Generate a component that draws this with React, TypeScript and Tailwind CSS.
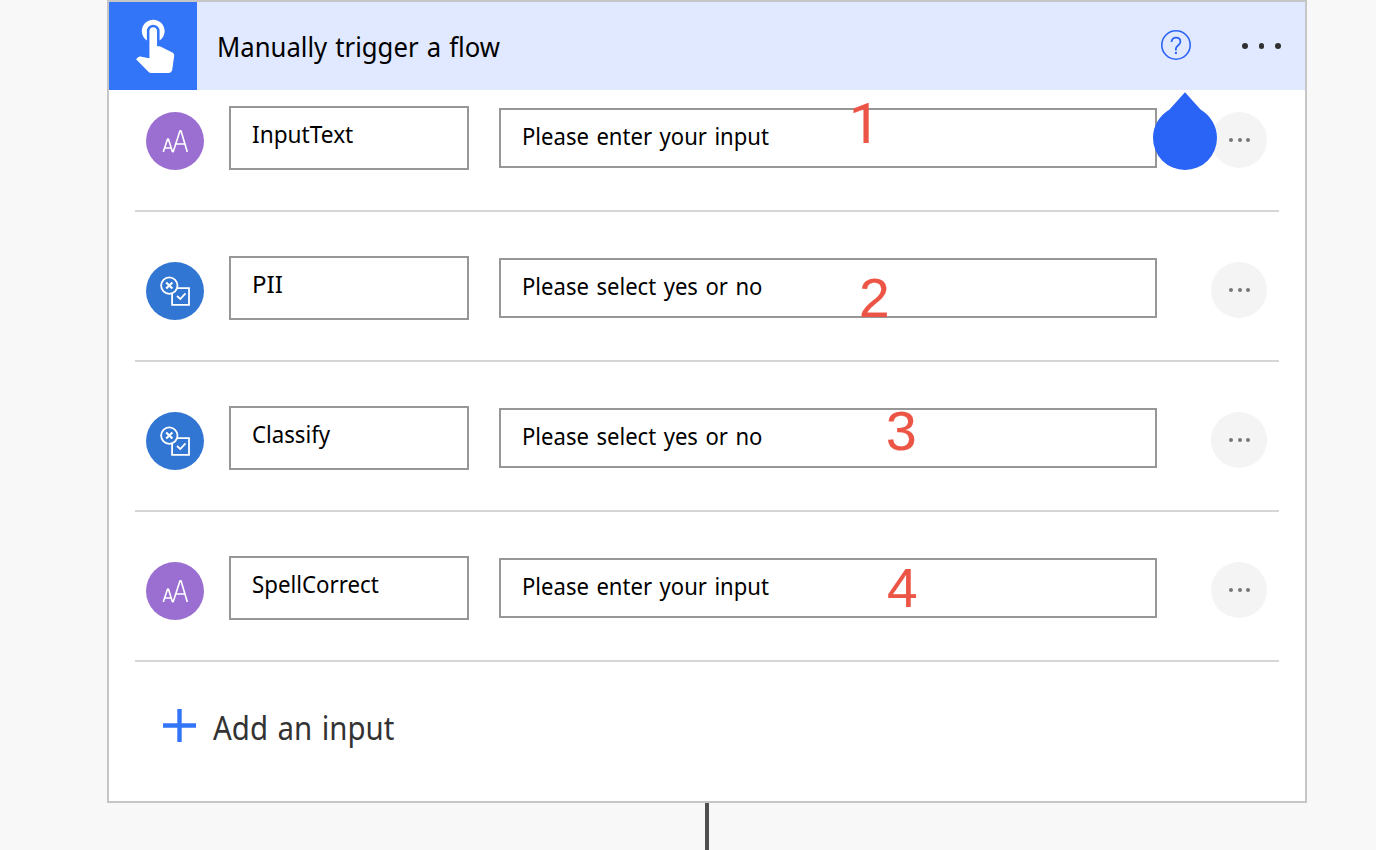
import React from "react";
import { MdTouchApp } from "react-icons/md";

type Kind = "text" | "boolean";

interface FlowInput {
  kind: Kind;
  name: string;
  prompt: string;
  nameScale: string;
  step: string;
  stepStyle: string;
}

const inputs: FlowInput[] = [
  { kind: "text", name: "InputText", prompt: "Please enter your input", nameScale: "scale-x-[0.944]", step: "1", stepStyle: "left-[348px] top-[-14px] font-['Roboto',sans-serif]" },
  { kind: "boolean", name: "PII", prompt: "Please select yes or no", nameScale: "scale-x-100", step: "2", stepStyle: "left-[358px] top-[10px] font-['Liberation_Sans',Arial,sans-serif]" },
  { kind: "boolean", name: "Classify", prompt: "Please select yes or no", nameScale: "scale-x-[0.925]", step: "3", stepStyle: "left-[385px] top-[-7px] font-['Liberation_Sans',Arial,sans-serif]" },
  { kind: "text", name: "SpellCorrect", prompt: "Please enter your input", nameScale: "scale-x-[0.928]", step: "4", stepStyle: "left-[386px] top-0 font-['Liberation_Sans',Arial,sans-serif]" },
];

function TextIcon() {
  return (
    <svg viewBox="0 0 58 58" className="size-full" fill="none" stroke="#fff" strokeWidth="1.6" strokeLinejoin="bevel">
      <path d="M17.5 40V39.3L21.6 27H22.4L26.3 39.6H27.3L34 18.8H35L41.1 39.3V40M18.8 36H25.1M29.3 32H39" />
    </svg>
  );
}

function BooleanIcon() {
  return (
    <svg viewBox="0 0 58 58" className="size-full" fill="none" stroke="#fff" strokeWidth="1.8">
      <circle cx="23.3" cy="23.6" r="8.2" />
      <path d="M20.2 20.4 26.4 26.6M26.4 20.4 20.2 26.6" strokeWidth="2.1" />
      <path d="M31.2 26.2H43V42.9H26.1V31.4" />
      <path d="M31 34 34.3 37 39.5 31.3" />
    </svg>
  );
}

function Dots({ gap, size }: { gap: string; size: string }) {
  return (
    <span className={`flex ${gap}`}>
      {[0, 1, 2].map((i) => (
        <span key={i} className={`rounded-full ${size}`} />
      ))}
    </span>
  );
}

function InputRow({ input }: { input: FlowInput }) {
  return (
    <div className="flex h-[150px] items-start border-b-2 border-[#d6d6d6] pl-[11px]">
      <div className={`mt-[50px] size-[58px] rounded-full ${input.kind === "text" ? "bg-[#9a6fd1]" : "bg-[#3176d2]"}`}>
        {input.kind === "text" ? <TextIcon /> : <BooleanIcon />}
      </div>
      <div className="mt-[44px] ml-[25px] h-16 w-60 border-2 border-[#979797] pl-[21px] text-2xl leading-[52px]">
        <span className={`inline-block origin-left ${input.nameScale}`}>{input.name}</span>
      </div>
      <div className="relative mt-[46px] ml-[30px] h-[60px] w-[658px] border-2 border-[#979797] pl-[21px] text-2xl leading-[52px]">
        <span className="inline-block origin-left scale-x-[0.92] [word-spacing:1.9px]">{input.prompt}</span>
        <span className={`absolute text-[55px] leading-[56px] text-[#ec5545] [-webkit-text-stroke:0.2px_#ec5545] ${input.stepStyle}`}>
          {input.step}
        </span>
      </div>
      <button className="mt-[50px] ml-[54px] flex size-14 items-center justify-center rounded-full bg-[#f4f4f4] pl-[1px]">
        <Dots gap="gap-[4.7px]" size="size-1 bg-[#767676]" />
      </button>
    </div>
  );
}

export default function App() {
  return (
    <main className="flex h-[850px] w-[1376px] flex-col overflow-hidden bg-[#f8f8f8] pl-[107px] font-['Noto_Sans',sans-serif] text-black">
      <section className="h-[803px] w-[1200px] shrink-0 border-2 border-[#c6c6c6] bg-white">
        <header className="relative flex h-[88px] items-center bg-[#e0e9ff]">
          <div className="h-[88px] w-[88px] bg-[#3375f8] pt-[10px] pl-[15px]">
            <MdTouchApp className="size-[61px] overflow-visible text-white" />
          </div>
          <h1 className="ml-5 origin-left scale-x-[0.917] text-[28px] leading-[40px] [word-spacing:1.6px]">Manually trigger a flow</h1>
          <svg viewBox="0 0 30 30" className="mr-[51px] mb-[2px] ml-auto size-[30px]" fill="none" stroke="#2a64f6">
            <circle cx="15" cy="15" r="14.2" strokeWidth="1.6" />
            <path d="M10.5 12.1C10.5 9.3 12.3 7.6 15 7.6S19.4 9.3 19.4 11.8C19.4 15.2 14.9 15.6 14.9 18.6V20.4" strokeWidth="1.8" />
            <path d="M14.9 21.9V24" strokeWidth="2" />
          </svg>
          <div className="mr-[24.5px]">
            <Dots gap="gap-[11px]" size="size-[5.5px] bg-[#303030]" />
          </div>
          <svg viewBox="0 0 64 78" className="absolute top-[90px] left-[1044px] z-10 h-[78px] w-16" fill="#2a64f6">
            <path d="M32 0.3 47.5 17.5C57.5 23.5 64 34 64 46A32 32 0 1 1 0 46C0 34 6.5 23.5 16.5 17.5Z" />
          </svg>
        </header>
        <div className="-mt-[28px] px-[26px]">
          {inputs.map((input) => (
            <InputRow key={input.name} input={input} />
          ))}
        </div>
        <button className="flex items-center pt-[41px] pl-[54px] text-[32px] leading-[50px] text-[#333]">
          <svg viewBox="0 0 33 33" className="mr-[17px] mb-[6px] size-[33px]" stroke="#3375f8" strokeWidth="4.4">
            <path d="M16.5 0V33M0 16.5H33" />
          </svg>
          <span className="inline-block origin-left scale-x-[0.92] [word-spacing:2px]">Add an input</span>
        </button>
      </section>
      <div className="ml-[598px] h-[47px] w-1 bg-[#505050]" />
    </main>
  );
}
